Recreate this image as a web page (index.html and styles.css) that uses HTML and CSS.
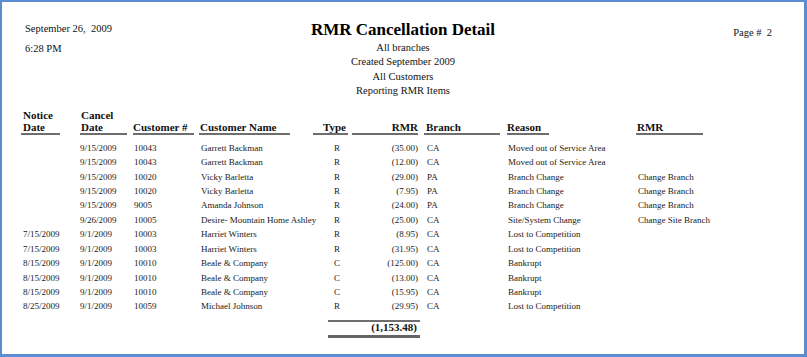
FILE: index.html
```html
<!DOCTYPE html>
<html lang="en">
<head>
<meta charset="utf-8">
<title>RMR Cancellation Detail</title>
<link rel="stylesheet" href="styles.css">
</head>
<body>
<div class="frame">
  <header class="report-head">
    <div class="head-left">
      <div class="head-line">September 26, &nbsp;2009</div>
      <div class="head-line">6:28 PM</div>
    </div>
    <div class="head-center">
      <h1 class="title">RMR Cancellation Detail</h1>
      <div class="subtitles">
        <div>All branches</div>
        <div>Created September 2009</div>
        <div>All Customers</div>
        <div>Reporting RMR Items</div>
      </div>
    </div>
    <div class="head-right">
      <div class="page-no">Page # &nbsp;2</div>
    </div>
  </header>

  <div class="cols col-head">
    <div class="h h1">Notice<br>Date</div>
    <div class="h h2">Cancel<br>Date</div>
    <div class="h h3">Customer #</div>
    <div class="h h4">Customer Name</div>
    <div class="h h5">Type</div>
    <div class="h h6">RMR</div>
    <div class="h h7">Branch</div>
    <div class="h h8">Reason</div>
    <div class="h h9">RMR</div>
  </div>

  <div class="rows">
    <div class="cols row"><div class="c c1"></div><div class="c c2">9/15/2009</div><div class="c c3">10043</div><div class="c c4">Garrett Backman</div><div class="c c5">R</div><div class="c c6">(35.00)</div><div class="c c7">CA</div><div class="c c8">Moved out of Service Area</div><div class="c c9"></div></div>
    <div class="cols row"><div class="c c1"></div><div class="c c2">9/15/2009</div><div class="c c3">10043</div><div class="c c4">Garrett Backman</div><div class="c c5">R</div><div class="c c6">(12.00)</div><div class="c c7">CA</div><div class="c c8">Moved out of Service Area</div><div class="c c9"></div></div>
    <div class="cols row"><div class="c c1"></div><div class="c c2">9/15/2009</div><div class="c c3">10020</div><div class="c c4">Vicky Barletta</div><div class="c c5">R</div><div class="c c6">(29.00)</div><div class="c c7">PA</div><div class="c c8">Branch Change</div><div class="c c9">Change Branch</div></div>
    <div class="cols row"><div class="c c1"></div><div class="c c2">9/15/2009</div><div class="c c3">10020</div><div class="c c4">Vicky Barletta</div><div class="c c5">R</div><div class="c c6">(7.95)</div><div class="c c7">PA</div><div class="c c8">Branch Change</div><div class="c c9">Change Branch</div></div>
    <div class="cols row"><div class="c c1"></div><div class="c c2">9/15/2009</div><div class="c c3">9005</div><div class="c c4">Amanda Johnson</div><div class="c c5">R</div><div class="c c6">(24.00)</div><div class="c c7">PA</div><div class="c c8">Branch Change</div><div class="c c9">Change Branch</div></div>
    <div class="cols row"><div class="c c1"></div><div class="c c2">9/26/2009</div><div class="c c3">10005</div><div class="c c4">Desire- Mountain Home Ashley</div><div class="c c5">R</div><div class="c c6">(25.00)</div><div class="c c7">CA</div><div class="c c8">Site/System Change</div><div class="c c9">Change Site Branch</div></div>
    <div class="cols row"><div class="c c1">7/15/2009</div><div class="c c2">9/1/2009</div><div class="c c3">10003</div><div class="c c4">Harriet Winters</div><div class="c c5">R</div><div class="c c6">(8.95)</div><div class="c c7">CA</div><div class="c c8">Lost to Competition</div><div class="c c9"></div></div>
    <div class="cols row"><div class="c c1">7/15/2009</div><div class="c c2">9/1/2009</div><div class="c c3">10003</div><div class="c c4">Harriet Winters</div><div class="c c5">R</div><div class="c c6">(31.95)</div><div class="c c7">CA</div><div class="c c8">Lost to Competition</div><div class="c c9"></div></div>
    <div class="cols row"><div class="c c1">8/15/2009</div><div class="c c2">9/1/2009</div><div class="c c3">10010</div><div class="c c4">Beale &amp; Company</div><div class="c c5">C</div><div class="c c6">(125.00)</div><div class="c c7">CA</div><div class="c c8">Bankrupt</div><div class="c c9"></div></div>
    <div class="cols row"><div class="c c1">8/15/2009</div><div class="c c2">9/1/2009</div><div class="c c3">10010</div><div class="c c4">Beale &amp; Company</div><div class="c c5">C</div><div class="c c6">(13.00)</div><div class="c c7">CA</div><div class="c c8">Bankrupt</div><div class="c c9"></div></div>
    <div class="cols row"><div class="c c1">8/15/2009</div><div class="c c2">9/1/2009</div><div class="c c3">10010</div><div class="c c4">Beale &amp; Company</div><div class="c c5">C</div><div class="c c6">(15.95)</div><div class="c c7">CA</div><div class="c c8">Bankrupt</div><div class="c c9"></div></div>
    <div class="cols row"><div class="c c1">8/25/2009</div><div class="c c2">9/1/2009</div><div class="c c3">10059</div><div class="c c4">Michael Johnson</div><div class="c c5">R</div><div class="c c6">(29.95)</div><div class="c c7">CA</div><div class="c c8">Lost to Competition</div><div class="c c9"></div></div>
  </div>

  <div class="cols total-row">
    <div class="total">(1,153.48)</div>
  </div>
</div>
</body>
</html>
```

FILE: styles.css
```css
html, body {
  margin: 0;
  padding: 0;
  background: #ffffff;
}

.frame {
  box-sizing: border-box;
  width: 807px;
  height: 357px;
  border-style: solid;
  border-color: #5a8bd3;
  border-width: 2px 3px 3px 2px;
  padding: 0 0 0 19px;
  font-family: "Liberation Serif", "Times New Roman", serif;
  color: #111;
  background: #fff;
  overflow: hidden;
}

/* ---------- header ---------- */
.report-head {
  display: grid;
  grid-template-columns: 1fr auto 1fr;
  margin-left: -19px;
}

.head-left {
  padding: 17px 0 0 23px;
  font-size: 10.5px;
}

.head-line {
  line-height: 20px;
  white-space: nowrap;
}

.head-center {
  padding-top: 17px;
  text-align: center;
}

.title {
  margin: 0;
  font-size: 17px;
  font-weight: bold;
  line-height: 22px;
  color: #000;
}

.subtitles {
  font-size: 10.5px;
  line-height: 14.4px;
}

.head-right {
  display: flex;
  justify-content: flex-end;
  padding: 21px 32px 0 0;
  font-size: 10.5px;
}

.page-no {
  line-height: 20px;
  white-space: nowrap;
}

/* ---------- table grid ---------- */
.cols {
  display: grid;
  grid-template-columns: 59px 53px 66px 114px 39px 68px 87px 129px 67px;
}

.col-head {
  margin-top: 10px;
  align-items: end;
  font-size: 11px;
  font-weight: bold;
  line-height: 12px;
  color: #111;
}

.h {
  border-bottom: 2px solid #6e6e6e;
  white-space: nowrap;
  box-sizing: border-box;
}

.h1 { width: 39px; padding-left: 2px; }
.h2 { width: 47px; padding-left: 1px; }
.h3 { width: 61px; }
.h4 { width: 91px; padding-left: 1px; }
.h5 { width: 35px; text-align: right; padding-right: 2px; }
.h6 { width: 66px; text-align: right; }
.h7 { width: 76px; margin-left: 4px; padding-left: 2px; }
.h8 { width: 42px; }
.h9 { width: 67px; padding-left: 1px; }

.rows {
  margin-top: 6px;
  font-size: 9px;
  color: #1a1a1a;
}

.row {
  height: 14.45px;
  line-height: 14.45px;
}

.c {
  white-space: nowrap;
}

.c1 { padding-left: 2px; }
.c2 { padding-left: 0; }
.c3 { padding-left: 1px; }
.c4 { padding-left: 2px; }
.c5 { padding-left: 21px; }
.c6 { text-align: right; padding-right: 2px; }
.c7 { padding-left: 7px; }
.c8 { padding-left: 1px; }
.c9 { padding-left: 2px; }

/* ---------- total ---------- */
.total-row {
  margin-top: 6px;
}

.total {
  grid-column: 5 / 7;
  margin-left: 15px;
  border-top: 2px solid #6e6e6e;
  border-bottom: 3px solid #666;
  padding: 0 3px 2px 0;
  font-size: 11px;
  font-weight: bold;
  line-height: 11px;
  text-align: right;
  color: #111;
}
```
